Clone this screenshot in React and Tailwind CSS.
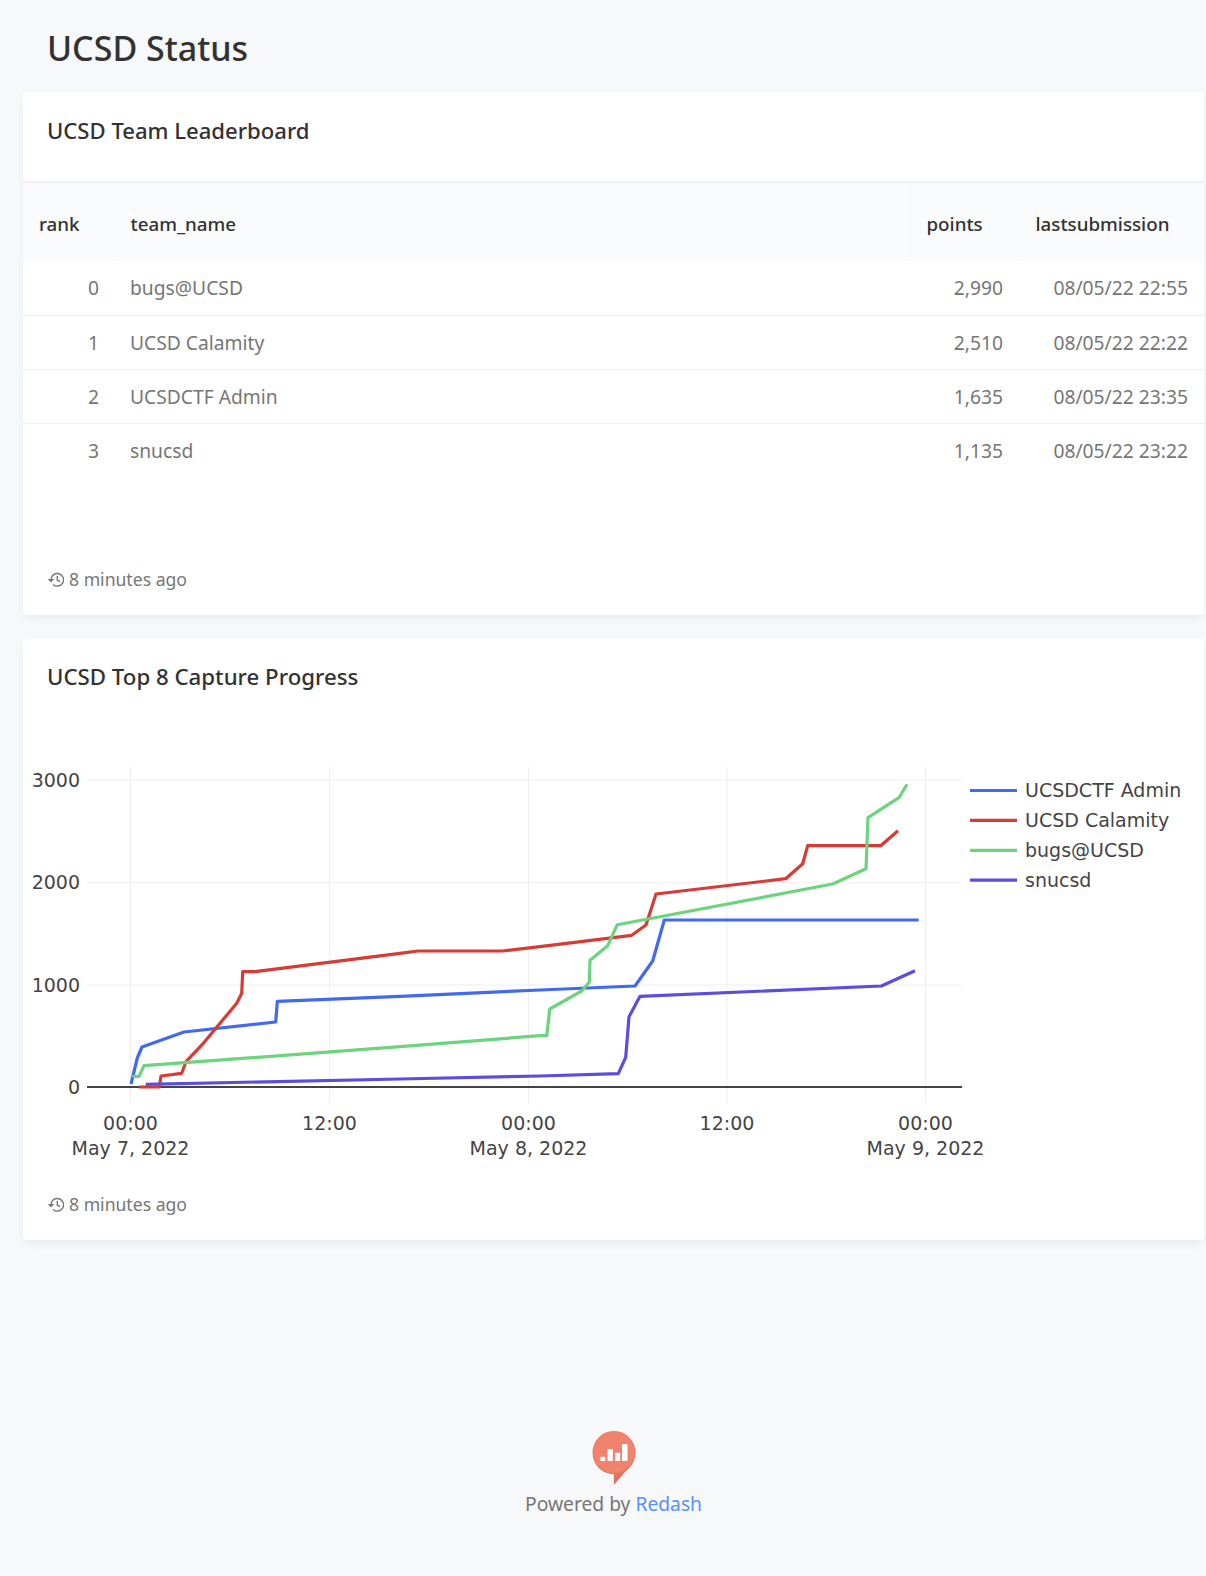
const rows = [
  { rank: 0, team: "bugs@UCSD", points: "2,990", last: "08/05/22 22:55" },
  { rank: 1, team: "UCSD Calamity", points: "2,510", last: "08/05/22 22:22" },
  { rank: 2, team: "UCSDCTF Admin", points: "1,635", last: "08/05/22 23:35" },
  { rank: 3, team: "snucsd", points: "1,135", last: "08/05/22 23:22" },
];

const series = [
  {
    name: "UCSDCTF Admin",
    color: "#4169f2",
    points:
      "131,1084 137.3,1058 142,1047 184,1032 275.7,1022 277.3,1001.3 400,996.3 540,990 635,986 652.7,961 664.3,920 918.7,920",
  },
  {
    name: "UCSD Calamity",
    color: "#d63b35",
    points:
      "139.3,1087 159.3,1087 161,1076 181.7,1073.3 186,1061.7 203.3,1043.3 236.7,1003.3 241.7,993.3 242.7,971.7 255,971.7 400,953.3 418,951 502.5,951 540,946.7 631.7,935.3 646,925 656,894 785.7,878.7 802.7,863.7 807.7,845.7 880.7,845.7 898,830.7",
  },
  {
    name: "bugs@UCSD",
    color: "#6dd47e",
    points:
      "132.3,1076.3 139,1076.3 144,1065.7 400,1046.7 540,1035.7 546.7,1035.7 548,1025 549.7,1009 581.7,991 589.3,982.3 590,960.3 607.7,945.7 617.3,924.7 646.7,919.3 832.7,884 866,868.7 868,817.7 899.3,797.3 907,784.3",
  },
  {
    name: "snucsd",
    color: "#5a4de0",
    points:
      "145.7,1084.3 400,1079 540,1076 618.3,1073.7 625.7,1057.3 629,1016.7 640,996.3 881.4,986 915,970.7",
  },
];

const yTicks = [
  { label: "3000", y: 780 },
  { label: "2000", y: 882.7 },
  { label: "1000", y: 985 },
];
const xTicks = [
  { x: 130.5, time: "00:00", date: "May 7, 2022" },
  { x: 329.5, time: "12:00" },
  { x: 528.5, time: "00:00", date: "May 8, 2022" },
  { x: 727, time: "12:00" },
  { x: 925.5, time: "00:00", date: "May 9, 2022" },
];

// chart coords are page coords, the svg starts at y=740
const Chart = () => (
  <svg width="1181" height="440" viewBox="23 740 1181 440" className="block" style={{ fontFamily: '"DejaVu Sans", Verdana, sans-serif' }}>
    {xTicks.map((t) => (
      <line key={t.x} x1={t.x} x2={t.x} y1="767" y2="1103" stroke="#eeeeee" strokeWidth="1" />
    ))}
    {yTicks.map((t) => (
      <line key={t.y} x1="87" x2="962" y1={t.y} y2={t.y} stroke="#eeeeee" strokeWidth="1" />
    ))}
    <line x1="87" x2="962" y1="1087" y2="1087" stroke="#444444" strokeWidth="2" />
    {series.map((s) => (
      <polyline key={s.name} points={s.points} fill="none" stroke={s.color} strokeWidth="3.2" strokeLinejoin="round" />
    ))}
    <g fontSize="19" fill="#444444">
      {yTicks.map((t) => (
        <text key={t.label} x="80" y={t.y + 6.5} textAnchor="end">{t.label}</text>
      ))}
      <text x="80" y="1093.5" textAnchor="end">0</text>
      {xTicks.map((t) => (
        <g key={t.x}>
          <text x={t.x} y="1130" textAnchor="middle">{t.time}</text>
          {t.date && <text x={t.x} y="1155" textAnchor="middle">{t.date}</text>}
        </g>
      ))}
      {series.map((s, i) => (
        <g key={s.name}>
          <line x1="970" x2="1017" y1={790.5 + i * 29.9} y2={790.5 + i * 29.9} stroke={s.color} strokeWidth="3.2" />
          <text x="1025" y={797 + i * 29.9}>{s.name}</text>
        </g>
      ))}
    </g>
  </svg>
);

const TimeRestore = () => (
  <svg width="17" height="15" viewBox="0 0 17 15" fill="none" stroke="currentColor" strokeWidth="1.4">
    <path d="M4 7.5A6.3 6.3 0 1 1 6 12.4" />
    <path d="M0.8 7h6.4L4 10.4Z" fill="currentColor" stroke="none" />
    <path d="M10.3 4v4l2.8 1.6" />
  </svg>
);

const Updated = () => (
  <div className="flex items-center gap-[5px] pl-6 text-[17.6px] leading-6 text-[#767676]">
    <TimeRestore />
    <span>8 minutes ago</span>
  </div>
);

const App = () => {
  return (
    <div className="min-h-[1576px] bg-[#f6f8f9] pl-[23px] pr-[2px] text-[#767676]" style={{ fontFamily: '"Noto Sans", sans-serif' }}>
      <h1 className="pl-6 pt-6 pb-5 text-[34px] leading-[48px] font-medium text-[#323232]">UCSD Status</h1>

      {/* leaderboard */}
      <div className="h-[523px] rounded-[3px] bg-white shadow-[0_4px_9px_-3px_rgba(102,136,153,0.15)]">
        <div className="h-[91px] border-b-2 border-[#f0f0f0] pl-6 pt-6 text-[22.1px] leading-7 font-medium text-[#323232]">UCSD Team Leaderboard</div>
        <table className="w-full table-fixed border-collapse text-[19.25px]">
          <thead>
            <tr className="h-[78px] bg-[#fafbfd] text-[18.75px] text-[#323232]">
              <th className="w-[92px] border-r border-[#f6f7f9] pl-4 pt-1 text-left font-medium">rank</th>
              <th className="border-r border-[#f6f7f9] pl-[15px] pt-1 text-left font-medium">team_name</th>
              <th className="w-[109px] border-r border-[#f6f7f9] pl-4 pt-1 text-left font-medium">points</th>
              <th className="w-[185px] pl-4 pt-1 text-left font-medium">lastsubmission</th>
            </tr>
          </thead>
          <tbody>
            {rows.map((row) => (
              <tr key={row.rank} className="h-[54px] border-t border-[#f0f0f0] first:border-t-0">
                <td className="pr-4 pt-[2px] text-right">{row.rank}</td>
                <td className="pl-[15px] pt-[2px]">{row.team}</td>
                <td className="pr-4 pt-[2px] text-right">{row.points}</td>
                <td className="pr-4 pt-[2px] text-right">{row.last}</td>
              </tr>
            ))}
          </tbody>
        </table>
        <div className="pt-[90px]">
          <Updated />
        </div>
      </div>

      {/* progress chart */}
      <div className="mt-6 h-[601px] rounded-[3px] bg-white shadow-[0_4px_9px_-3px_rgba(102,136,153,0.15)]">
        <div className="h-[101px] pl-6 pt-6 text-[22.25px] leading-7 font-medium text-[#323232]">UCSD Top 8 Capture Progress</div>
        <Chart />
        <div className="pt-3">
          <Updated />
        </div>
      </div>

      {/* footer */}
      <div className="mt-[191px] flex flex-col items-center">
        <svg width="44" height="54" viewBox="0 0 44 54">
          <path d="M21.8 42V54L37.5 36Z" fill="#e0745f" />
          <circle cx="22" cy="21.7" r="21.5" fill="#e0745f" />
          <circle cx="22" cy="21" r="21" fill="#f0826e" />
          <g fill="#ffffff">
            <rect x="8.25" y="25.7" width="5" height="4.3" rx="0.8" />
            <rect x="15.5" y="18" width="5.4" height="12" rx="0.8" />
            <rect x="23.2" y="21.7" width="5" height="8.3" rx="0.8" />
            <rect x="30" y="13" width="5.5" height="17" rx="0.8" />
          </g>
        </svg>
        <p className="mt-[5px] text-[19.25px] leading-7">
          Powered by <span className="text-[#5b8ff9]">Redash</span>
        </p>
      </div>
    </div>
  );
};

export default App;
